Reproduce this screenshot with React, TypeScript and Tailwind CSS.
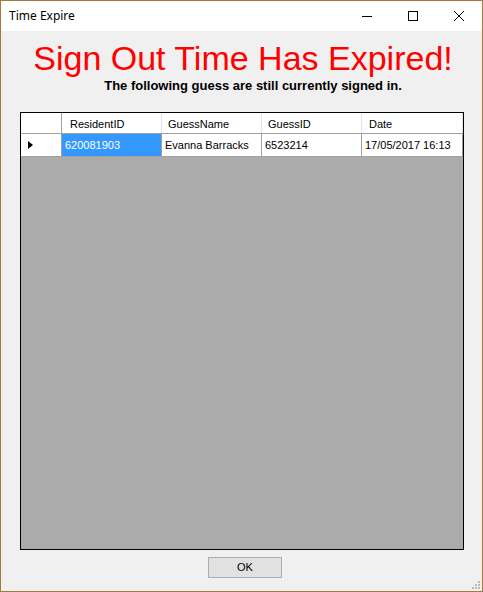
const columns = ["ResidentID", "GuessName", "GuessID", "Date"];
const row = ["620081903", "Evanna Barracks", "6523214", "17/05/2017 16:13"];

function CaptionButtons() {
  return (
    <div className="ml-auto flex h-full">
      {/* minimize */}
      <div className="flex h-full w-[46px] items-center justify-center">
        <svg width="10" height="10" viewBox="0 0 10 10">
          <path d="M0 5.5h10" stroke="#000" strokeWidth="1" />
        </svg>
      </div>
      {/* maximize */}
      <div className="flex h-full w-[46px] items-center justify-center">
        <svg width="10" height="10" viewBox="0 0 10 10">
          <rect x="0.5" y="0.5" width="9" height="9" fill="none" stroke="#000" strokeWidth="1" />
        </svg>
      </div>
      {/* close */}
      <div className="flex h-full w-[46px] items-center justify-center">
        <svg width="10" height="10" viewBox="0 0 10 10">
          <path d="M0 0L10 10M10 0L0 10" stroke="#000" strokeWidth="1" />
        </svg>
      </div>
    </div>
  );
}

function Grip() {
  const dots = [
    [6, 0],
    [3, 3],
    [6, 3],
    [0, 6],
    [3, 6],
    [6, 6],
  ];
  return (
    <svg className="absolute bottom-[2px] right-[2px]" width="8" height="8" viewBox="0 0 8 8">
      {dots.map(([x, y]) => (
        <rect key={`${x}-${y}`} x={x} y={y} width="2" height="2" fill="#b8b8b8" />
      ))}
    </svg>
  );
}

export default function App() {
  return (
    <div className="flex h-[592px] w-[483px] flex-col border border-[#aa7443] font-['Liberation_Sans',Arial,sans-serif] text-black">
      {/* Title bar */}
      <div className="flex h-[30px] items-center bg-white">
        <span className="pl-[8px] font-['Noto_Sans',sans-serif] text-[12px]">Time Expire</span>
        <CaptionButtons />
      </div>

      {/* Client area */}
      <div className="relative flex flex-1 flex-col bg-[#f0f0f0] px-[19px]">
        <h1 className="mt-[10px] pl-[3px] text-center text-[34px] leading-[34px] text-[#ff0000]">
          Sign Out Time Has Expired!
        </h1>
        <p className="mt-[4px] pl-[23px] text-center text-[13px] font-bold leading-[13px]">
          The following guess are still currently signed in.
        </p>

        {/* Data grid */}
        <div className="mt-[20px] flex h-[438px] w-[444px] flex-col border border-black bg-[#ababab] text-[11px]">
          <div className="flex h-[21px] border-b border-[#a0a0a0] bg-white">
            <div className="w-[41px] border-r border-[#a0a0a0]" />
            {columns.map((c, i) => (
              <div
                key={c}
                className={`flex items-center border-r border-[#e3e3e3] pt-[2px] pl-[6px] ${i === 0 ? "w-[100px] pl-[8px]" : i === 3 ? "flex-1 pl-[7px]" : "w-[100px]"}`}
              >
                {c}
              </div>
            ))}
          </div>
          <div className="flex h-[23px] border-b border-[#a0a0a0] bg-white">
            <div className="flex w-[41px] items-center border-r border-[#a0a0a0] pl-[7px]">
              <svg width="5" height="8" viewBox="0 0 5 8">
                <path d="M0 0L5 4L0 8Z" fill="#000" />
              </svg>
            </div>
            {row.map((v, i) => (
              <div
                key={v}
                className={`flex items-center border-r border-[#a0a0a0] pt-[1px] pl-[3px] ${i === 0 ? "w-[100px] bg-[#3399ff] text-white" : i === 3 ? "flex-1" : "w-[100px]"}`}
              >
                {v}
              </div>
            ))}
          </div>
        </div>

        <button className="ml-[188px] mt-[7px] h-[21px] w-[74px] border border-[#adadad] bg-[#e1e1e1] text-[11px]">
          OK
        </button>

        <Grip />
      </div>
    </div>
  );
}
